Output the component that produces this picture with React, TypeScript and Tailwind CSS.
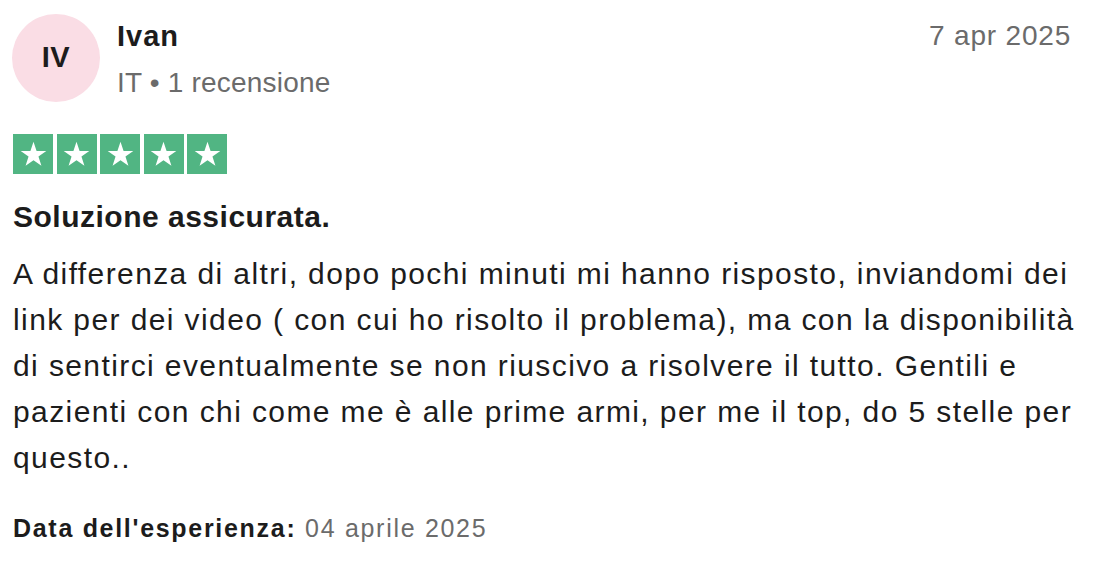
export default function App() {
  const font = { fontFamily: '"Liberation Sans", Arial, sans-serif' };
  return (
    <div className="w-[1104px] h-[568px] bg-white text-[#1c1c1c] overflow-hidden" style={font}>
      <div className="pl-[13px] pr-[34px] pt-[14px]">
        <div className="flex items-start">
          <div className="w-[88px] h-[88px] rounded-full bg-[#fadde5] flex items-center justify-center shrink-0 -ml-[1px]">
            <span className="text-[29px] font-bold text-[#1c1c1c] tracking-[0.5px]">IV</span>
          </div>
          <div className="ml-[17px] flex flex-col">
            <span className="text-[29px] font-bold leading-[40px] mt-[2px] tracking-[1px]">Ivan</span>
            <span className="text-[28px] leading-[36px] text-[#6b6b6b] mt-[9px] tracking-[0.2px]">IT • 1 recensione</span>
          </div>
          <div className="ml-auto text-[28px] leading-[40px] text-[#6b6b6b] mt-[2px] tracking-[0.8px] -mr-[1px]">7 apr 2025</div>
        </div>
        <div className="flex gap-[3.5px] mt-[32px]">
          {[0, 1, 2, 3, 4].map((i) => (
            <div key={i} className="w-[40px] h-[40px] bg-[#51b583] flex items-center justify-center">
              <svg width="29" height="29" viewBox="0 0 24 24">
                <path
                  d="M12 1.5l2.55 7.55h8.05l-6.5 4.7 2.45 7.65L12 16.7l-6.55 4.7 2.45-7.65-6.5-4.7h8.05z"
                  fill="#ffffff"
                />
              </svg>
            </div>
          ))}
        </div>
        <div className="mt-[25px] text-[30px] font-bold leading-[36px] tracking-[0.5px]">Soluzione assicurata.</div>
        <p className="mt-[16px] text-[30px] leading-[46px] text-[#1c1c1c] tracking-[1.4px] whitespace-nowrap">
          A differenza di altri, dopo pochi minuti mi hanno risposto, inviandomi dei
          <br />
          link per dei video ( con cui ho risolto il problema), ma con la disponibilità
          <br />
          di sentirci eventualmente se non riuscivo a risolvere il tutto. Gentili e
          <br />
          pazienti con chi come me è alle prime armi, per me il top, do 5 stelle per
          <br />
          questo..
        </p>
        <div className="mt-[31px] text-[25px] leading-[32px] tracking-[1.7px]">
          <span className="font-bold">Data dell'esperienza:</span>{" "}
          <span className="text-[#6b6b6b]">04 aprile 2025</span>
        </div>
      </div>
    </div>
  );
}
